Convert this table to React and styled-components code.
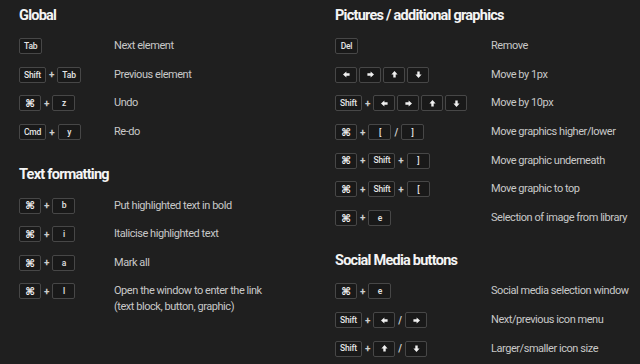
import React from 'react'
import styled, { createGlobalStyle } from 'styled-components'

const GlobalStyle = createGlobalStyle`
  html, body {
    margin: 0;
    background: #1f1f1f;
  }
  body {
    font-family: "Roboto", sans-serif;
  }
`

const Page = styled.div`
  display: flex;
  width: 640px;
  height: 364px;
  box-sizing: border-box;
  padding: 6px 0 0 19px;
  background: #1f1f1f;
  overflow: hidden;
`

const Column = styled.div`
  display: flex;
  flex-direction: column;
  width: ${props => props.width}px;
`

const Section = styled.section`
  display: flex;
  flex-direction: column;
  margin-bottom: 19px;
`

const Heading = styled.h2`
  margin: 0 0 6px;
  height: 20px;
  line-height: 20px;
  font-family: "Roboto", sans-serif;
  font-weight: 700;
  font-size: 14.5px;
  letter-spacing: -0.75px;
  color: #f4f4f4;
  white-space: nowrap;
`

const Row = styled.div`
  display: grid;
  grid-template-columns: ${props => props.keyWidth}px 1fr;
  align-items: start;
  min-height: 28.6px;
  padding-top: 6.3px;
  box-sizing: border-box;
`

const Combo = styled.div`
  display: flex;
  align-items: center;
  height: 16px;
`

const Key = styled.span`
  display: inline-flex;
  align-items: center;
  justify-content: center;
  box-sizing: border-box;
  height: 16px;
  min-width: ${props => props.wide ? 22 : 23}px;
  padding: 0 4px;
  margin-right: ${props => props.tight ? 2 : 0}px;
  border: 1px solid #474747;
  border-radius: 2px;
  background: #191919;
  color: #e4e4e4;
  font-family: "Roboto", sans-serif;
  font-size: 8.5px;
  font-weight: 500;
  letter-spacing: -0.2px;
  line-height: 1;
`

const CmdGlyph = styled.span`
  font-family: "DejaVu Sans", sans-serif;
  font-size: 10.5px;
  font-weight: 700;
  color: #f2f2f2;
`

const Sep = styled.span`
  margin: 0 3px;
  color: #cfcfcf;
  font-family: "Roboto", sans-serif;
  font-size: 10px;
  font-weight: 700;
`

const Desc = styled.div`
  color: #c8c8c8;
  font-size: 11px;
  letter-spacing: -0.45px;
  line-height: 16px;
  white-space: nowrap;
`

const arrowRot = { left: 0, right: 180, up: 90, down: 270 }

const Arrow = ({ dir }) => (
  <svg width="7" height="7" viewBox="0 0 7 7" style={{ transform: `rotate(${arrowRot[dir]}deg)` }}>
    <path d="M0 3.5 L3.4 0.4 L3.4 2.3 L6.6 2.3 L6.6 4.7 L3.4 4.7 L3.4 6.6 Z" fill="#f0f0f0" />
  </svg>
)

const Cmd = () => <Key wide><CmdGlyph>⌘</CmdGlyph></Key>
const K = ({ children }) => <Key>{children}</Key>
const A = ({ dir, tight }) => <Key wide tight={tight}><Arrow dir={dir} /></Key>

const left = [
  {
    title: 'Global',
    rows: [
      [<K>Tab</K>, 'Next element'],
      [<><K>Shift</K><Sep>+</Sep><K>Tab</K></>, 'Previous element'],
      [<><Cmd /><Sep>+</Sep><K>z</K></>, 'Undo'],
      [<><K>Cmd</K><Sep>+</Sep><K>y</K></>, 'Re-do'],
    ],
  },
  {
    title: 'Text formatting',
    rows: [
      [<><Cmd /><Sep>+</Sep><K>b</K></>, 'Put highlighted text in bold'],
      [<><Cmd /><Sep>+</Sep><K>i</K></>, 'Italicise highlighted text'],
      [<><Cmd /><Sep>+</Sep><K>a</K></>, 'Mark all'],
      [<><Cmd /><Sep>+</Sep><K>l</K></>, <>Open the window to enter the link<br />(text block, button, graphic)</>],
    ],
  },
]

const right = [
  {
    title: 'Pictures / additional graphics',
    rows: [
      [<K>Del</K>, 'Remove'],
      [<><A dir="left" tight /><A dir="right" tight /><A dir="up" tight /><A dir="down" /></>, 'Move by 1px'],
      [<><K>Shift</K><Sep>+</Sep><A dir="left" tight /><A dir="right" tight /><A dir="up" tight /><A dir="down" /></>, 'Move by 10px'],
      [<><Cmd /><Sep>+</Sep><K>[</K><Sep>/</Sep><K>]</K></>, 'Move graphics higher/lower'],
      [<><Cmd /><Sep>+</Sep><K>Shift</K><Sep>+</Sep><K>]</K></>, 'Move graphic underneath'],
      [<><Cmd /><Sep>+</Sep><K>Shift</K><Sep>+</Sep><K>[</K></>, 'Move graphic to top'],
      [<><Cmd /><Sep>+</Sep><K>e</K></>, 'Selection of image from library'],
    ],
  },
  {
    title: 'Social Media buttons',
    rows: [
      [<><Cmd /><Sep>+</Sep><K>e</K></>, 'Social media selection window'],
      [<><K>Shift</K><Sep>+</Sep><A dir="left" /><Sep>/</Sep><A dir="right" /></>, 'Next/previous icon menu'],
      [<><K>Shift</K><Sep>+</Sep><A dir="up" /><Sep>/</Sep><A dir="down" /></>, 'Larger/smaller icon size'],
    ],
  },
]

const ShortcutColumn = ({ sections, width, keyWidth }) => (
  <Column width={width}>
    {sections.map((section, i) => (
      <Section key={i}>
        <Heading>{section.title}</Heading>
        {section.rows.map(([keys, text], j) => (
          <Row key={j} keyWidth={keyWidth}>
            <Combo>{keys}</Combo>
            <Desc>{text}</Desc>
          </Row>
        ))}
      </Section>
    ))}
  </Column>
)

export default function App() {
  return (
    <>
      <GlobalStyle />
      <Page>
        <ShortcutColumn sections={left} width={316} keyWidth={95} />
        <ShortcutColumn sections={right} width={300} keyWidth={156} />
      </Page>
    </>
  )
}
